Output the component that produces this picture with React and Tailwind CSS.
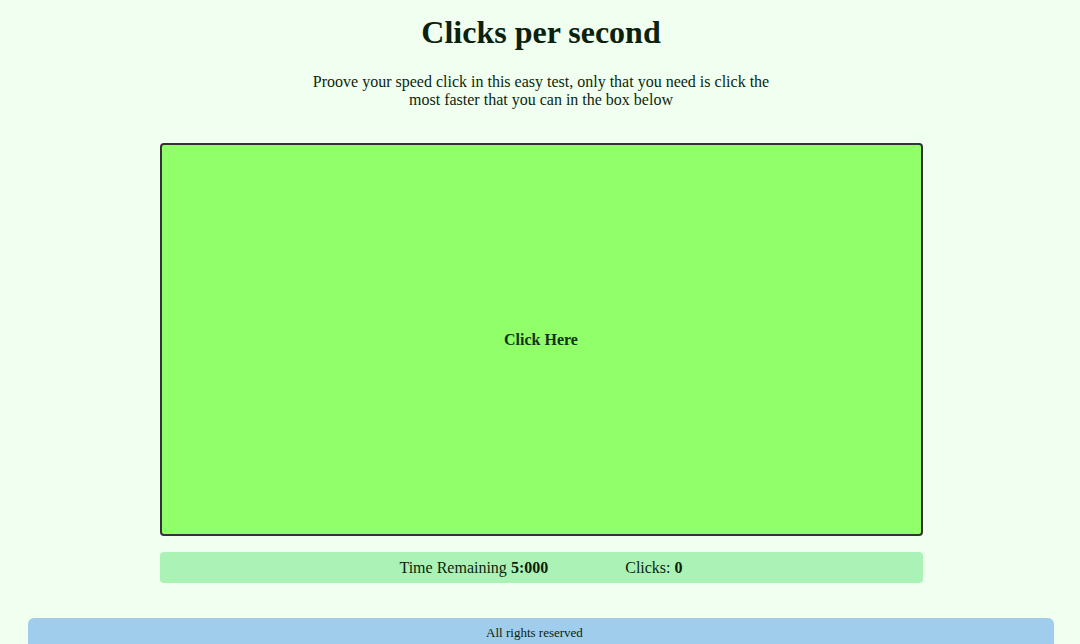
export default function App() {
  return (
    <div className="min-h-screen bg-[#f0fff0] text-[#0d1f0d] pt-[14px] pl-[2px]" style={{ fontFamily: '"Liberation Serif", serif' }}>
      <h1 className="text-center text-[32px] font-bold leading-[37px]">Clicks per second</h1>
      <p className="mx-auto mt-[22px] max-w-[480px] text-center text-base leading-[18px]">
        Proove your speed click in this easy test, only that you need is click the most faster that you can in the box below
      </p>
      <div className="mx-auto mt-[34px] flex h-[393px] w-[763px] items-center justify-center rounded-[4px] border-2 border-[#333] bg-[#90ff6a]">
        <span className="text-base font-bold text-[#143214]">Click Here</span>
      </div>
      <div className="mx-auto mt-[16px] flex h-[31px] w-[763px] items-center justify-center gap-[77px] rounded-[4px] bg-[#aaf2b6] text-base">
        <span>
          Time Remaining <b>5:000</b>
        </span>
        <span>
          Clicks: <b>0</b>
        </span>
      </div>
      <footer className="mx-[26px] mt-[35px] rounded-t-[6px] bg-[#a0cdeb] pt-[7px] pb-[6px] pr-[13px] text-center text-[13px] leading-[16px]">
        All rights reserved
      </footer>
    </div>
  )
}
